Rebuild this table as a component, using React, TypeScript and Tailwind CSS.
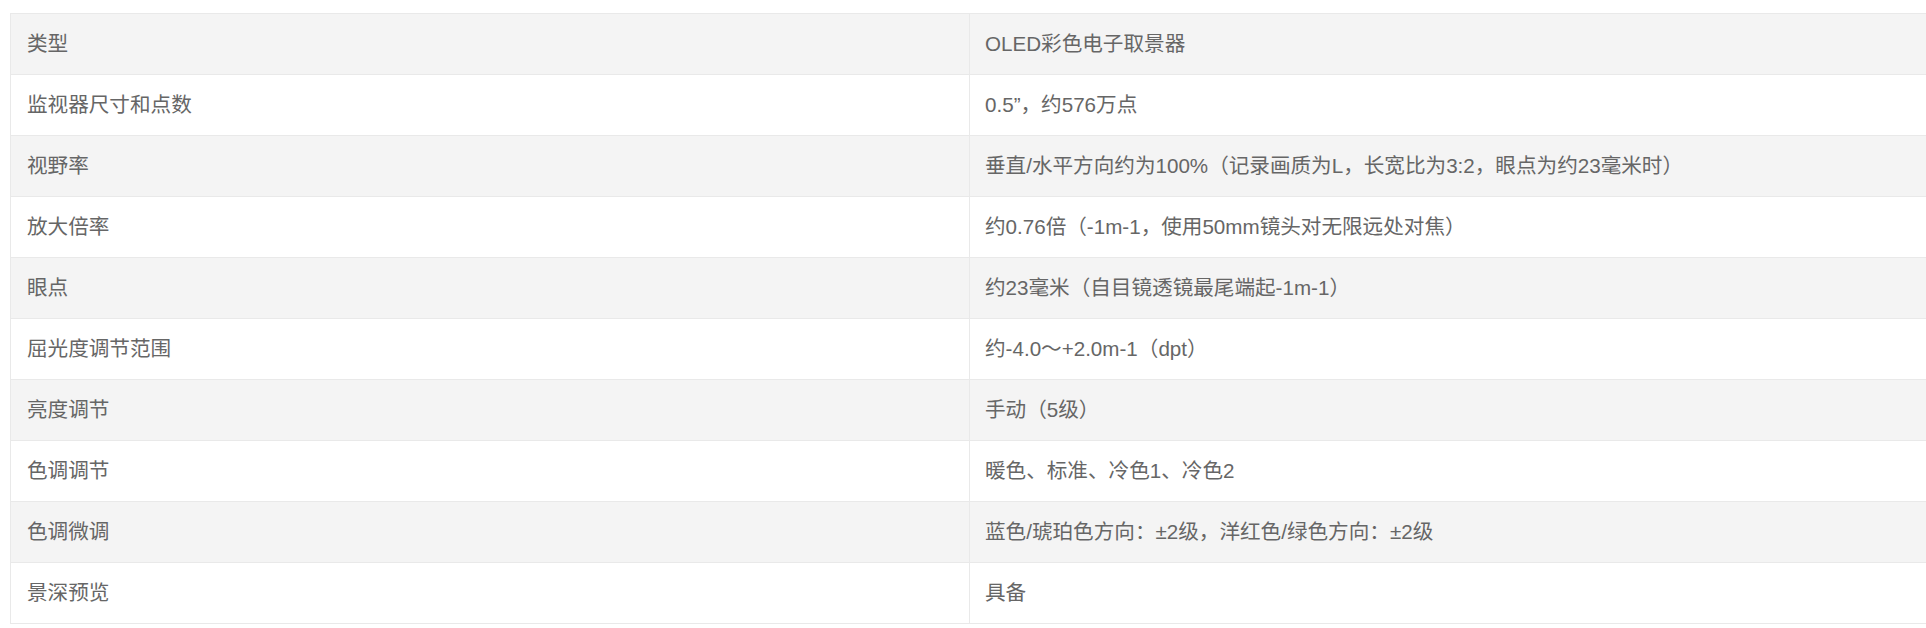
import React from 'react';

// 取景器规格
const ROWS: [string, string][] = [
  ['类型', 'OLED彩色电子取景器'],
  ['监视器尺寸和点数', '0.5”，约576万点'],
  ['视野率', '垂直/水平方向约为100%（记录画质为L，长宽比为3:2，眼点为约23毫米时）'],
  ['放大倍率', '约0.76倍（-1m-1，使用50mm镜头对无限远处对焦）'],
  ['眼点', '约23毫米（自目镜透镜最尾端起-1m-1）'],
  ['屈光度调节范围', '约-4.0～+2.0m-1（dpt）'],
  ['亮度调节', '手动（5级）'],
  ['色调调节', '暖色、标准、冷色1、冷色2'],
  ['色调微调', '蓝色/琥珀色方向：±2级，洋红色/绿色方向：±2级'],
  ['景深预览', '具备'],
];

export default function App() {
  return (
    <div
      className="min-h-screen bg-white pt-[13px] pl-[10px] text-[#666] text-[20.6px]"
      style={{ fontFamily: '"Liberation Sans", Arial, "Noto Sans CJK SC", sans-serif' }}
    >
      <div className="border-l border-b border-[#e9e9e9]">
        {ROWS.map(([label, value], i) => (
          <div
            key={label}
            className={`grid grid-cols-[958px_1fr] border-t border-[#e9e9e9] ${
              i % 2 === 0 ? 'bg-[#f4f4f4]' : 'bg-white'
            }`}
          >
            <div className="h-[60px] leading-[60px] px-4 whitespace-nowrap">{label}</div>
            <div className="h-[60px] leading-[60px] pl-[15px] border-l border-[#e9e9e9] whitespace-nowrap">
              {value}
            </div>
          </div>
        ))}
      </div>
    </div>
  );
}
